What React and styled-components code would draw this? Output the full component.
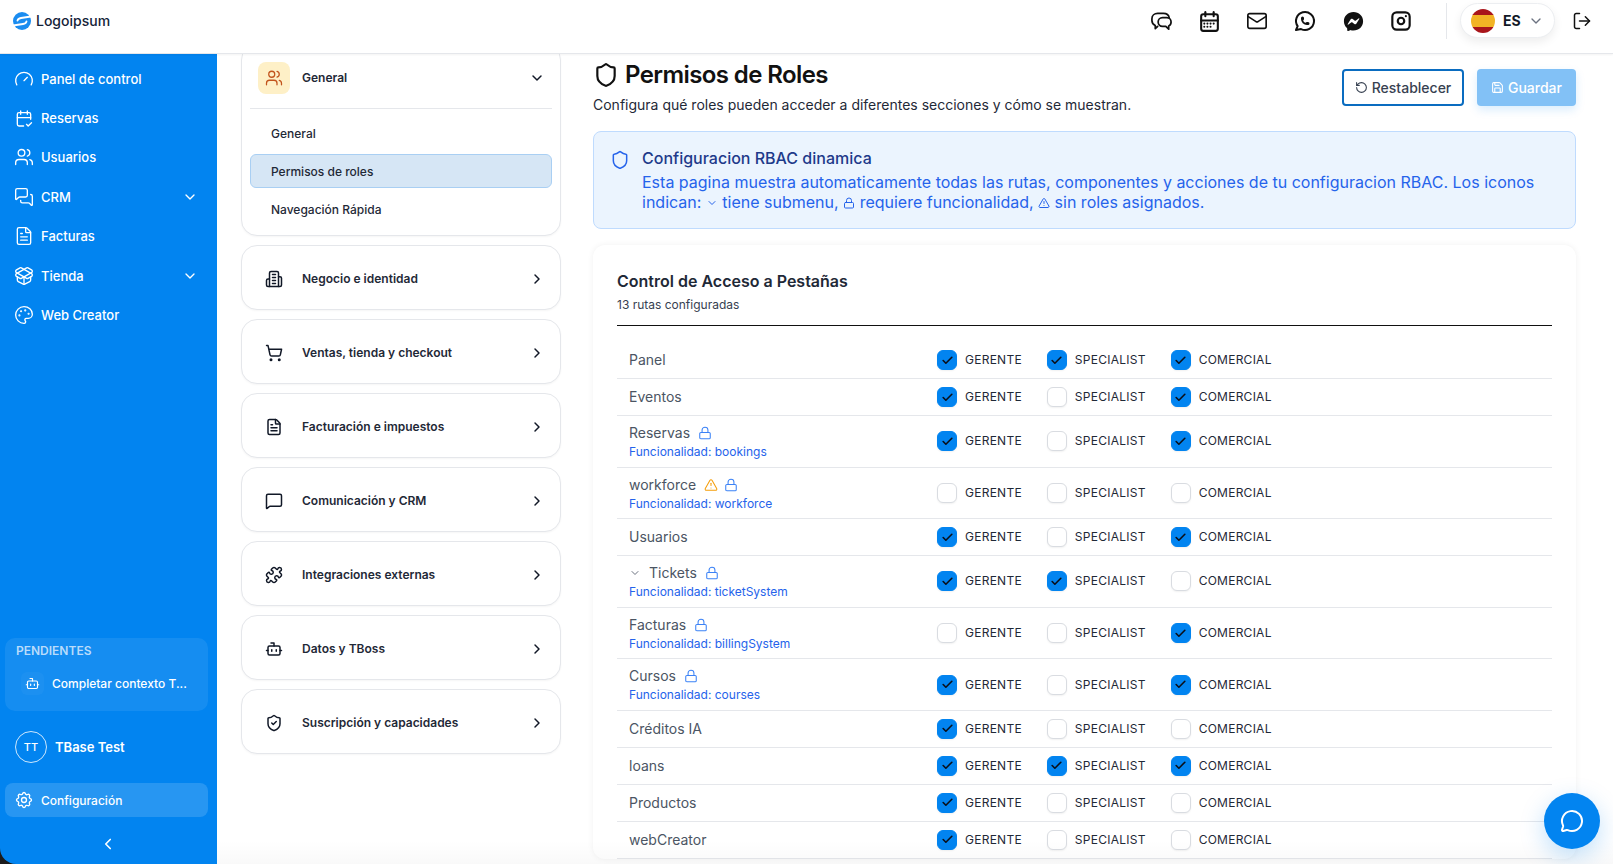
import React from "react";
import styled, { createGlobalStyle } from "styled-components";
import {
  Gauge, Users, MessagesSquare, FileText, PackageOpen, Palette, ChevronDown, ChevronLeft,
  ChevronRight, Bot, ShoppingCart, MessageSquare, Puzzle, ShieldCheck, Shield, RotateCcw, Save,
  Lock, TriangleAlert, Check, MessageCircle, Mail, LogOut,
} from "lucide-react";
import { TbCalendarCheck, TbSettings, TbCalendarMonth, TbBrandWhatsapp, TbBrandInstagram } from "react-icons/tb";
import { RiMessengerFill } from "react-icons/ri";

const GlobalStyle = createGlobalStyle`
  html, body { margin: 0; padding: 0; height: 100%; background: #fff; }
  body { font-family: Inter, "Liberation Sans", sans-serif; overflow: hidden; }
  * { box-sizing: border-box; }
`;

const BuildingIcon = ({ size = 18 }) => (
  <svg width={size} height={size} viewBox="0 0 24 24" fill="none" stroke="currentColor" strokeWidth="2" strokeLinecap="round" strokeLinejoin="round">
    <path d="M6 22V4a2 2 0 0 1 2-2h8a2 2 0 0 1 2 2v18Z" />
    <path d="M6 12H4a2 2 0 0 0-2 2v6a2 2 0 0 0 2 2h2" />
    <path d="M18 9h2a2 2 0 0 1 2 2v9a2 2 0 0 1-2 2h-2" />
    <path d="M10 6h4M10 10h4M10 14h4M10 18h4" />
  </svg>
);

const ChatBubbles = () => (
  <svg width="23" height="23" viewBox="0 0 24 24" fill="none" stroke="currentColor" strokeWidth="1.8" strokeLinecap="round" strokeLinejoin="round">
    <path d="M8 17 5.5 19.5v-3.3C3.5 15.3 2 13.6 2 11V9c0-3.3 2.7-5.5 6-5.5h6c3 0 5.500 1.500 6 4.500" />
    <path d="M13 8h4.500C20 8 22 10 22 12.500c0 2-1 3.500-2.500 4.200V20l-3-3H13c-2.500 0-4.500-2-4.500-4.500S10.500 8 13 8Z" />
  </svg>
);

const LogoMark = () => (
  <svg width="18" height="18" viewBox="0 0 18 18">
    <circle cx="9" cy="9" r="9" fill="#1a8cf0" />
    <path d="M18 4.500 8 6C5.500 6.400 4.700 7 4.500 8.700" fill="none" stroke="#fff" strokeWidth="1.800" strokeLinecap="round" />
    <path d="M0 13.500 10 12c2.500-.4 3.300-1 3.500-2.700" fill="none" stroke="#fff" strokeWidth="1.800" strokeLinecap="round" />
  </svg>
);

const navItems = [
  { label: "Panel de control", icon: Gauge },
  { label: "Reservas", icon: TbCalendarCheck, tabler: true },
  { label: "Usuarios", icon: Users },
  { label: "CRM", icon: MessagesSquare, more: true },
  { label: "Facturas", icon: FileText },
  { label: "Tienda", icon: PackageOpen, more: true },
  { label: "Web Creator", icon: Palette },
];

const sections = [
  { label: "Negocio e identidad", icon: BuildingIcon },
  { label: "Ventas, tienda y checkout", icon: ShoppingCart },
  { label: "Facturación e impuestos", icon: FileText },
  { label: "Comunicación y CRM", icon: MessageSquare },
  { label: "Integraciones externas", icon: Puzzle },
  { label: "Datos y TBoss", icon: Bot },
  { label: "Suscripción y capacidades", icon: ShieldCheck },
];

const routes = [
  { name: "Panel", roles: [1, 1, 1] },
  { name: "Eventos", roles: [1, 0, 1] },
  { name: "Reservas", feature: "bookings", roles: [1, 0, 1] },
  { name: "workforce", feature: "workforce", warn: true, roles: [0, 0, 0] },
  { name: "Usuarios", roles: [1, 0, 1] },
  { name: "Tickets", feature: "ticketSystem", sub: true, roles: [1, 1, 0] },
  { name: "Facturas", feature: "billingSystem", roles: [0, 0, 1] },
  { name: "Cursos", feature: "courses", roles: [1, 0, 1] },
  { name: "Créditos IA", roles: [1, 0, 0] },
  { name: "loans", roles: [1, 1, 1] },
  { name: "Productos", roles: [1, 0, 0] },
  { name: "webCreator", roles: [1, 0, 0] },
];

const roleNames = ["GERENTE", "SPECIALIST", "COMERCIAL"];

export default function App() {
  return (
    <Page>
      <GlobalStyle />
      <TopBar>
        <Logo>
          <LogoMark />
          <LogoText>Logoipsum</LogoText>
        </Logo>
        <TopIcons>
          <TopIcon><ChatBubbles /></TopIcon>
          <TopIcon><TbCalendarMonth size={25} /></TopIcon>
          <TopIcon><Mail size={22} strokeWidth={1.8} /></TopIcon>
          <TopIcon><TbBrandWhatsapp size={24} /></TopIcon>
          <TopIcon><RiMessengerFill size={23} /></TopIcon>
          <TopIcon><TbBrandInstagram size={26} /></TopIcon>
        </TopIcons>
        <TopDivider />
        <LangPill>
          <Flag />
          <LangCode>ES</LangCode>
          <ChevronDown size={16} color="#6b7280" />
        </LangPill>
        <LogoutButton><LogOut size={20} strokeWidth={1.8} /></LogoutButton>
      </TopBar>

      <Body>
        <SidebarShell>
          <Sidebar>
            <Nav>
              {navItems.map((item) => (
                <NavItem key={item.label}>
                  <NavIcon>{item.tabler ? <item.icon size={23} strokeWidth={1.6} /> : <item.icon size={20} strokeWidth={1.6} />}</NavIcon>
                  <NavLabel>{item.label}</NavLabel>
                  {item.more && <ChevronDown size={16} />}
                </NavItem>
              ))}
            </Nav>
            <SideBottom>
              <Pending>
                <PendingTitle>PENDIENTES</PendingTitle>
                <PendingItem>
                  <PendingIcon><Bot size={15} strokeWidth={1.8} /></PendingIcon>
                  <PendingText>Completar contexto T...</PendingText>
                </PendingItem>
              </Pending>
              <UserRow>
                <Avatar>TT</Avatar>
                <UserName>TBase Test</UserName>
              </UserRow>
              <ConfigItem>
                <NavIcon><TbSettings size={20} strokeWidth={1.6} /></NavIcon>
                <ConfigLabel>Configuración</ConfigLabel>
              </ConfigItem>
              <Collapse><ChevronLeft size={18} strokeWidth={2.2} /></Collapse>
            </SideBottom>
          </Sidebar>
        </SidebarShell>

        <SectionColumn>
          <Card>
            <CardHead>
              <IconTile><Users size={18} strokeWidth={1.7} /></IconTile>
              <CardTitle>General</CardTitle>
              <ChevronDown size={16} strokeWidth={2.2} />
            </CardHead>
            <SubList>
              <SubItem>General</SubItem>
              <SubItem $active>Permisos de roles</SubItem>
              <SubItem>Navegación Rápida</SubItem>
            </SubList>
          </Card>
          {sections.map((s) => (
            <Card key={s.label}>
              <CardHead>
                <PlainIcon><s.icon size={18} /></PlainIcon>
                <CardTitle>{s.label}</CardTitle>
                <ChevronRight size={16} strokeWidth={2.2} />
              </CardHead>
            </Card>
          ))}
        </SectionColumn>

        <Content>
          <PageHead>
            <div>
              <PageTitle><Shield size={26} strokeWidth={2} />Permisos de Roles</PageTitle>
              <PageSub>Configura qué roles pueden acceder a diferentes secciones y cómo se muestran.</PageSub>
            </div>
            <Actions>
              <ResetButton><RotateCcw size={13} />Restablecer</ResetButton>
              <SaveButton><Save size={13} />Guardar</SaveButton>
            </Actions>
          </PageHead>

          <InfoBox>
            <InfoIcon><Shield size={20} strokeWidth={1.8} /></InfoIcon>
            <div>
              <InfoTitle>Configuracion RBAC dinamica</InfoTitle>
              <InfoBody>
                Esta pagina muestra automaticamente todas las rutas, componentes y acciones de tu configuracion RBAC. Los iconos indican:{" "}
                <ChevronDown size={12} /> tiene submenu, <Lock size={12} /> requiere funcionalidad, <TriangleAlert size={12} /> sin roles asignados.
              </InfoBody>
            </div>
          </InfoBox>

          <AccessCard>
            <AccessTitle>Control de Acceso a Pestañas</AccessTitle>
            <AccessCount>13 rutas configuradas</AccessCount>
            <Rows>
              {routes.map((r) => (
                <Row key={r.name} $multi={r.feature}>
                  <RouteCell>
                    <RouteName>
                      {r.sub && <SubCaret><ChevronDown size={12} /></SubCaret>}
                      {r.name}
                      {r.warn && <WarnIcon><TriangleAlert size={14} strokeWidth={1.8} /></WarnIcon>}
                      {r.feature && <LockIcon $tight={r.warn}><Lock size={14} strokeWidth={1.8} /></LockIcon>}
                    </RouteName>
                    {r.feature && <RouteFeature>Funcionalidad: {r.feature}</RouteFeature>}
                  </RouteCell>
                  <RoleGroup>
                    {roleNames.map((role, i) => (
                      <RoleCheck key={role}>
                        <Box $on={r.roles[i]}>{r.roles[i] ? <Check size={13} strokeWidth={3} color="#0b0f19" /> : null}</Box>
                        <RoleName>{role}</RoleName>
                      </RoleCheck>
                    ))}
                  </RoleGroup>
                </Row>
              ))}
            </Rows>
          </AccessCard>
        </Content>
      </Body>

      <BottomFade />
      <ChatFab><MessageCircle size={24} strokeWidth={2} /></ChatFab>
    </Page>
  );
}

const Page = styled.div`
  height: 100vh;
  display: flex;
  flex-direction: column;
  overflow: hidden;
  background: #fff;
  position: relative;
`;

const TopBar = styled.header`
  height: 54px;
  flex: none;
  display: flex;
  align-items: flex-start;
  background: #fff;
  border-bottom: 1px solid #e5e7eb;
  box-shadow: 0 1px 2px rgba(0, 0, 0, 0.05);
  position: relative;
  z-index: 2;
`;

const Logo = styled.div`
  display: flex;
  align-items: center;
  gap: 5px;
  padding: 12px 0 0 13px;
  margin-right: auto;
`;

const LogoText = styled.span`
  font-size: 14px;
  line-height: 16px;
  font-weight: 500;
  color: #142338;
`;

const TopIcons = styled.div`
  display: flex;
  margin-top: 9px;
`;

const TopIcon = styled.div`
  width: 48px;
  height: 24px;
  display: flex;
  align-items: center;
  justify-content: center;
  color: #111;
`;

const TopDivider = styled.div`
  width: 1px;
  height: 36px;
  margin: 3px 13px 0 21px;
  background: #e5e7eb;
`;

const LangPill = styled.div`
  width: 95px;
  height: 35px;
  margin-top: 3px;
  padding: 0 10px;
  display: flex;
  align-items: center;
  border: 1px solid #eceef1;
  border-radius: 18px;
  background: #fff;
  box-shadow: 0 4px 10px rgba(0, 0, 0, 0.07);
`;

const Flag = styled.div`
  width: 24px;
  height: 24px;
  border-radius: 50%;
  background: linear-gradient(#a9151b 25%, #f2b325 25%, #f2b325 75%, #a9151b 75%);
`;

const LangCode = styled.span`
  margin: 0 auto 0 8px;
  font-size: 14px;
  font-weight: 700;
  color: #111827;
`;

const LogoutButton = styled.div`
  margin: 11px 0 0 17px;
  width: 41px;
  color: #111;
`;

const Body = styled.div`
  flex: 1;
  min-height: 0;
  display: flex;
  overflow: hidden;
`;

const SidebarShell = styled.div`
  width: 217px;
  flex: none;
  display: flex;
  background: #1c1c1c;
`;

const Sidebar = styled.aside`
  flex: 1;
  display: flex;
  flex-direction: column;
  background: #0284f0;
  color: #fff;
  border-bottom-left-radius: 16px;
`;

const Nav = styled.nav`
  padding: 5px 5px 0;
`;

const NavItem = styled.div`
  height: 39.4px;
  padding: 0 14px 0 9px;
  display: flex;
  align-items: center;
  gap: 7px;
`;

const NavIcon = styled.span`
  width: 20px;
  flex: none;
  display: flex;
  align-items: center;
  justify-content: center;
`;

const NavLabel = styled.span`
  flex: 1;
  font-size: 13px;
  font-weight: 500;
`;

const SideBottom = styled.div`
  margin-top: auto;
  padding: 0 9px 0 5px;
`;

const Pending = styled.div`
  height: 73px;
  padding: 5px 11px 0;
  border-radius: 10px;
  background: rgba(255, 255, 255, 0.08);
`;

const PendingTitle = styled.div`
  font-size: 12px;
  line-height: 16px;
  font-weight: 600;
  color: #b9dcfb;
`;

const PendingItem = styled.div`
  margin-top: 13px;
  display: flex;
  align-items: center;
  gap: 8px;
  padding-left: 5px;
`;

const PendingIcon = styled.div`
  width: 23px;
  height: 23px;
  flex: none;
  display: flex;
  align-items: center;
  justify-content: center;
  border-radius: 6px;
  background: rgba(255, 255, 255, 0.03);
`;

const PendingText = styled.span`
  font-size: 12px;
  font-weight: 500;
  white-space: nowrap;
`;

const UserRow = styled.div`
  margin: 20px 0;
  padding-left: 10px;
  display: flex;
  align-items: center;
  gap: 8px;
`;

const Avatar = styled.div`
  width: 32px;
  height: 32px;
  display: flex;
  align-items: center;
  justify-content: center;
  border: 1px solid rgba(255, 255, 255, 0.8);
  border-radius: 50%;
  font-size: 11px;
  font-weight: 500;
`;

const UserName = styled.span`
  font-size: 13px;
  font-weight: 600;
`;

const ConfigItem = styled.div`
  height: 34px;
  padding: 0 9px;
  display: flex;
  align-items: center;
  gap: 7px;
  border-radius: 8px;
  background: rgba(255, 255, 255, 0.15);
`;

const ConfigLabel = styled.span`
  font-size: 12px;
  font-weight: 500;
`;

const Collapse = styled.div`
  height: 47px;
  padding: 6px 0 0 2px;
  display: flex;
  align-items: center;
  justify-content: center;
`;

const SectionColumn = styled.div`
  width: 320px;
  flex: none;
  margin: -10px 32px 0 24px;
  display: flex;
  flex-direction: column;
  gap: 9px;
`;

const Card = styled.div`
  border: 1px solid #e5e7eb;
  border-radius: 16px;
  background: #fff;
  box-shadow: 0 1px 2px rgba(0, 0, 0, 0.04);
  overflow: hidden;
`;

const CardHead = styled.div`
  height: 63px;
  padding: 2px 15px 0 16px;
  display: flex;
  align-items: center;
  gap: 12px;
  color: #111827;
`;

const IconTile = styled.div`
  width: 32px;
  height: 32px;
  display: flex;
  align-items: center;
  justify-content: center;
  border-radius: 8px;
  background: #fef0c7;
  color: #c2541d;
`;

const PlainIcon = styled.div`
  width: 32px;
  height: 32px;
  display: flex;
  align-items: center;
  justify-content: center;
  color: #111827;
`;

const CardTitle = styled.span`
  flex: 1;
  font-size: 12px;
  font-weight: 600;
  color: #1f2937;
`;

const SubList = styled.div`
  margin: 0 8px;
  padding: 7px 0 9px;
  border-top: 1px solid #e5e7eb;
  display: flex;
  flex-direction: column;
  gap: 4px;
`;

const SubItem = styled.div`
  height: 34px;
  padding-left: 20px;
  display: flex;
  align-items: center;
  font-size: 12px;
  font-weight: 500;
  color: #1f2937;
  border: 1px solid ${(p) => (p.$active ? "#a9cff3" : "transparent")};
  border-radius: 6px;
  background: ${(p) => (p.$active ? "#d6e6f5" : "transparent")};
`;

const Content = styled.main`
  flex: 1;
  min-width: 0;
  padding: 5px 37px 0 0;
`;

const PageHead = styled.div`
  display: flex;
  align-items: center;
  justify-content: space-between;
`;

const PageTitle = styled.h1`
  margin: 0;
  display: flex;
  align-items: center;
  gap: 6px;
  font-size: 24px;
  line-height: 32px;
  font-weight: 600;
  letter-spacing: -0.6px;
  color: #111;
`;

const PageSub = styled.p`
  margin: 4px 0 0;
  font-size: 14px;
  line-height: 20px;
  color: #1f2937;
`;

const Actions = styled.div`
  display: flex;
  gap: 13px;
`;

const ResetButton = styled.button`
  width: 122px;
  height: 37px;
  display: flex;
  align-items: center;
  justify-content: center;
  gap: 4px;
  border: 2px solid #0a6cc0;
  border-radius: 4px;
  background: #fff;
  font: 500 14px Inter, sans-serif;
  color: #374151;
`;

const SaveButton = styled.button`
  width: 99px;
  height: 37px;
  display: flex;
  align-items: center;
  justify-content: center;
  gap: 4px;
  border: 0;
  border-radius: 4px;
  background: #82c1f6;
  box-shadow: 0 4px 10px rgba(2, 132, 240, 0.15);
  font: 500 14px Inter, sans-serif;
  color: #fff;
`;

const InfoBox = styled.div`
  margin-top: 16px;
  height: 98px;
  padding: 16px;
  display: flex;
  gap: 12px;
  border: 1px solid #bfdbfe;
  border-radius: 8px;
  background: #ebf4fe;
`;

const InfoIcon = styled.div`
  margin-top: 2px;
  color: #2563eb;
`;

const InfoTitle = styled.div`
  font-size: 16px;
  line-height: 20px;
  font-weight: 500;
  color: #1e3a8a;
`;

const InfoBody = styled.div`
  margin-top: 4px;
  font-size: 16px;
  line-height: 20px;
  color: #2563eb;
  svg {
    vertical-align: -1px;
  }
`;

const AccessCard = styled.section`
  margin-top: 16px;
  padding: 24px 24px 0;
  border-radius: 12px;
  background: #fff;
  box-shadow: 0 0 6px rgba(0, 0, 0, 0.06);
`;

const AccessTitle = styled.h2`
  margin: 0;
  font-size: 16px;
  line-height: 24px;
  font-weight: 600;
  color: #1f2937;
`;

const AccessCount = styled.div`
  margin-top: 4px;
  padding-bottom: 12px;
  font-size: 12px;
  line-height: 16px;
  color: #374151;
  border-bottom: 1px solid #111;
`;

const Rows = styled.div`
  padding-top: 16px;
`;

const Row = styled.div`
  padding: ${(p) => (p.$multi ? "7px" : "8px")} 12px;
  display: flex;
  align-items: center;
  border-bottom: 1px solid #e5e7eb;
`;

const RouteCell = styled.div`
  flex: 1;
`;

const RouteName = styled.div`
  display: flex;
  align-items: center;
  font-size: 14px;
  line-height: 20px;
  color: #4b5563;
`;

const SubCaret = styled.span`
  display: flex;
  width: 20px;
  color: #6b7280;
`;

const WarnIcon = styled.span`
  display: flex;
  margin-left: 8px;
  color: #f59e0b;
`;

const LockIcon = styled.span`
  display: flex;
  margin-left: ${(p) => (p.$tight ? "6px" : "8px")};
  color: #3b82f6;
`;

const RouteFeature = styled.div`
  margin-top: 2px;
  font-size: 12px;
  line-height: 14.6px;
  color: #2563eb;
`;

const RoleGroup = styled.div`
  width: 603px;
  flex: none;
  display: flex;
  gap: 25px;
`;

const RoleCheck = styled.label`
  display: flex;
  align-items: center;
  gap: 8px;
`;

const Box = styled.span`
  width: 20px;
  height: 20px;
  display: flex;
  align-items: center;
  justify-content: center;
  border: 1px solid ${(p) => (p.$on ? "#0284f0" : "#d9dce1")};
  border-radius: 6px;
  background: ${(p) => (p.$on ? "#0284f0" : "#fff")};
  box-shadow: 0 1px 2px rgba(0, 0, 0, 0.06);
`;

const RoleName = styled.span`
  padding-bottom: 1px;
  font-size: 12px;
  letter-spacing: 0.25px;
  color: #1f2937;
`;

const BottomFade = styled.div`
  position: absolute;
  left: 217px;
  right: 0;
  bottom: 0;
  height: 24px;
  background: linear-gradient(transparent, rgba(0, 0, 0, 0.025));
  pointer-events: none;
`;

const ChatFab = styled.button`
  position: absolute;
  right: 13px;
  bottom: 15px;
  width: 56px;
  height: 56px;
  display: flex;
  align-items: center;
  justify-content: center;
  border: 0;
  border-radius: 50%;
  background: #0284f0;
  color: #fff;
  box-shadow: 0 8px 24px rgba(2, 132, 240, 0.25);
  z-index: 3;
`;
